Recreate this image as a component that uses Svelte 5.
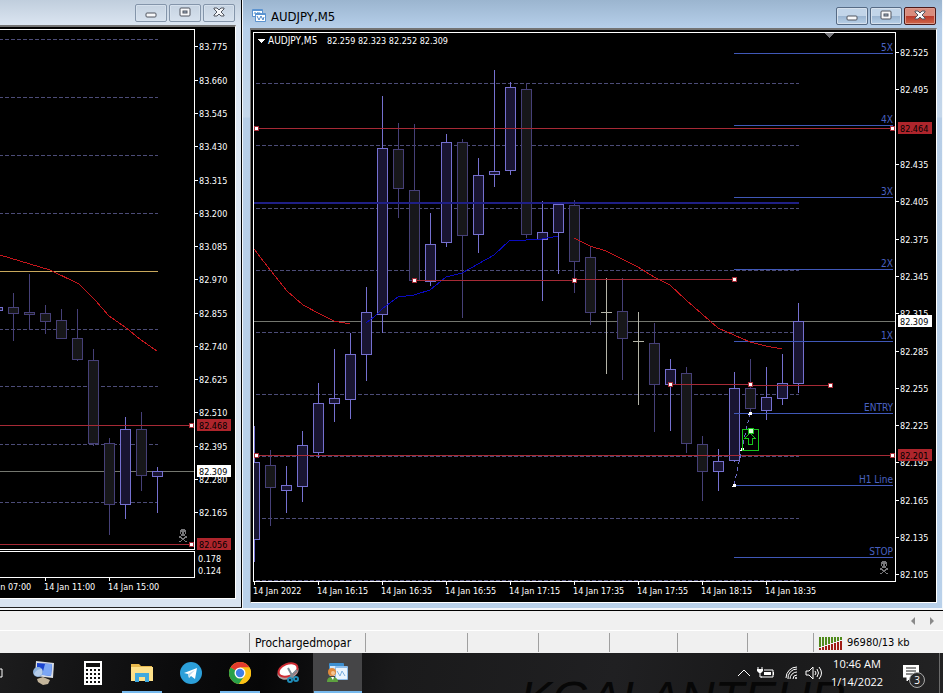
<script lang="ts">
	type Kind = 'up' | 'down' | 'doji';
	// x, high, body top, body bottom, low
	type Candle = [number, number, number, number, number, Kind];

	const h4Candles: Candle[] = [
		[-3, 307, 307, 310, 310, 'up'],
		[13, 293, 307, 313, 341, 'down'],
		[29, 274, 312, 314, 330, 'down'],
		[45, 305, 313, 321, 334, 'down'],
		[61, 309, 320, 338, 339, 'down'],
		[77, 309, 338, 359, 361, 'down'],
		[93, 349, 360, 443, 446, 'down'],
		[109, 438, 443, 504, 535, 'down'],
		[125, 417, 429, 504, 519, 'up'],
		[141, 412, 429, 475, 491, 'down'],
		[157, 467, 471, 476, 513, 'up']
	];

	const m5Candles: Candle[] = [
		[254, 426, 462, 539, 562, 'up'],
		[270, 450, 465, 487, 526, 'down'],
		[286, 466, 485, 490, 513, 'up'],
		[302, 431, 445, 486, 502, 'up'],
		[318, 383, 403, 452, 458, 'up'],
		[334, 349, 398, 403, 422, 'up'],
		[350, 333, 354, 399, 419, 'up'],
		[366, 287, 312, 354, 381, 'up'],
		[382, 96, 148, 314, 333, 'up'],
		[398, 123, 149, 188, 218, 'down'],
		[414, 124, 190, 280, 283, 'down'],
		[430, 213, 244, 281, 286, 'up'],
		[446, 134, 142, 242, 247, 'up'],
		[462, 139, 142, 235, 318, 'down'],
		[478, 158, 175, 234, 253, 'up'],
		[494, 70, 171, 174, 187, 'up'],
		[510, 82, 87, 170, 175, 'up'],
		[526, 83, 89, 234, 238, 'down'],
		[542, 201, 232, 239, 301, 'up'],
		[558, 203, 204, 232, 274, 'up'],
		[574, 200, 205, 261, 293, 'down'],
		[590, 246, 257, 312, 325, 'down'],
		[606, 278, 312, 312, 374, 'doji'],
		[622, 278, 311, 338, 380, 'down'],
		[638, 312, 341, 341, 405, 'doji'],
		[654, 323, 343, 384, 432, 'down'],
		[670, 359, 369, 384, 431, 'up'],
		[686, 367, 373, 443, 453, 'down'],
		[702, 436, 444, 471, 501, 'down'],
		[718, 449, 461, 471, 491, 'up'],
		[734, 372, 388, 460, 462, 'up'],
		[750, 359, 388, 408, 413, 'down'],
		[766, 367, 397, 410, 420, 'up'],
		[782, 354, 383, 398, 405, 'up'],
		[798, 303, 321, 383, 393, 'up']
	];

	const h4Prices: [string, number][] = [
		['83.775', 46], ['83.660', 80], ['83.545', 113], ['83.430', 146], ['83.315', 180],
		['83.200', 213], ['83.085', 246], ['82.970', 279], ['82.855', 313], ['82.740', 346],
		['82.625', 379], ['82.510', 412], ['82.395', 446], ['82.280', 479], ['82.165', 512]
	];
	const m5Prices: [string, number][] = [
		['82.525', 52], ['82.495', 89], ['82.435', 164], ['82.405', 201], ['82.375', 239],
		['82.345', 276], ['82.315', 313], ['82.285', 351], ['82.255', 388], ['82.225', 425],
		['82.195', 462], ['82.165', 500], ['82.135', 537], ['82.105', 574]
	];

	const levels: [string, number][] = [
		['5X', 53], ['4X', 125], ['3X', 197], ['2X', 269],
		['1X', 341], ['ENTRY', 413], ['H1 Line', 485], ['STOP', 557]
	];

	const h4Grid = [39, 97, 155, 213, 329, 386, 444, 502];
	const m5Grid = [83, 145, 208, 270, 332, 394, 456, 518, 580];
	const m5Times = ['14 Jan 2022', '14 Jan 16:15', '14 Jan 16:35', '14 Jan 16:55', '14 Jan 17:15', '14 Jan 17:35', '14 Jan 17:55', '14 Jan 18:15', '14 Jan 18:35'];
	const h4Times = ['14 Jan 07:00', '14 Jan 11:00', '14 Jan 15:00'];
	const statusWidths = [102, 71, 71, 68, 70, 66];
	const trafficBars = [0, 1, 2, 3, 4, 5, 6, 7];
</script>

{#snippet candles(list: Candle[])}
	{#each list as [x, high, top, bottom, low, kind]}
		<g class={kind}>
			<rect class="ink" {x} y={high} width="1" height={low - high} />
			<rect class="ink" x={x - 5} y={top} width="11" height={bottom - top + 1} />
			{#if kind !== 'doji'}
				<rect class="fill" x={x - 4} y={top + 1} width="9" height={Math.max(bottom - top - 1, 0)} />
			{/if}
		</g>
	{/each}
{/snippet}

{#snippet handle(x: number, y: number)}
	<rect class="handle-edge" x={x - 2} y={y - 2} width="5" height="5" />
	<rect class="handle" x={x - 1} y={y - 1} width="3" height="3" />
{/snippet}

{#snippet skull(x: number, y: number)}
	<g class="skull" transform="translate({x} {y})">
		<path d="M2 0h4v1h1v4h-1v2h-4v-2h-1v-4h1zM0 7h2v1h1v1h2v-1h1v-1h2v2h-2v1h-1v1h1v1h2v1h-2v-1h-1v-1h-2v1h-1v1h-2v-1h2v-1h1v-1h-1v-1h-2z" />
		<path class="hole" d="M2 3h1v2h-1zM5 3h1v2h-1z" />
	</g>
{/snippet}

{#snippet price(label: string, y: number)}
	<rect class="tick" x="0" {y} width="3" height="1" />
	<text x="4" y={y + 4}>{label}</text>
{/snippet}

{#snippet tag(label: string, y: number, kind: string)}
	<rect class="tag {kind}" x="2" y={y - 6} width="34" height="12" />
	<text class="tag-text {kind}" x="4" y={y + 4}>{label}</text>
{/snippet}

{#snippet windowButtons()}
	<div class="window-buttons">
		<button aria-label="Minimize">
			<svg width="14" height="14"><rect class="glyph" x="2" y="7" width="10" height="4" rx="1" /></svg>
		</button>
		<button aria-label="Restore">
			<svg width="14" height="14">
				<rect class="glyph" x="2" y="2" width="10" height="8" rx="1" />
				<rect class="glyph inner" x="5" y="5" width="4" height="2" />
			</svg>
		</button>
		<button class="close" aria-label="Close">
			<svg width="14" height="14">
				<path class="glyph" d="M2 2h3l2 2 2-2h3v1l-3 3 3 3v1h-3l-2-2-2 2h-3v-1l3-3-3-3z" />
			</svg>
		</button>
	</div>
{/snippet}

<div class="desktop">
	<main class="workspace">
		<section class="window inactive" aria-label="AUDJPY,H4">
			<header class="titlebar">{@render windowButtons()}</header>
			<div class="chart">
				<div class="plot">
					<svg class="canvas">
						<g transform="translate(0 -30)">
							{#each h4Grid as y}
								<line class="grid" x1="-1" x2="158" y1={y} y2={y} />
							{/each}
							<rect class="pivot" x="0" y="271" width="158" height="1" />
							<rect class="bid" x="0" y="471" width="194" height="1" />
							{@render candles(h4Candles)}
							<rect class="sr" x="0" y="425" width="194" height="1" />
							<rect class="sr" x="0" y="544" width="194" height="1" />
							<polyline class="ma red" points="0,255 50,270 79,284 95,300 109,316 125,327 141,340 157,351" />
							{@render skull(179, 529)}
							{@render handle(191, 425)}
							{@render handle(191, 544)}
						</g>
					</svg>
				</div>
				<div class="subplot"></div>
				<div class="price-axis">
					<svg class="canvas">
						<g transform="translate(0 -29)">
							{#each h4Prices as [label, y]}
								{@render price(label, y)}
							{/each}
							{@render tag('82.468', 425, 'red')}
							{@render tag('82.309', 471, 'white')}
							{@render tag('82.056', 544, 'red')}
							<text x="3" y="562">0.178</text>
							<text x="3" y="574">0.124</text>
						</g>
					</svg>
				</div>
				<div class="time-axis">
					<svg class="canvas">
						{#each h4Times as label, i}
							<rect class="tick" x={i * 64 - 19} y="0" width="1" height="3" />
							<text x={i * 64 - 20} y="12">{label}</text>
						{/each}
					</svg>
				</div>
			</div>
		</section>

		<section class="window active" aria-label="AUDJPY,M5">
			<header class="titlebar">
				<svg class="chart-icon" width="15" height="14">
					<rect x="0" y="0" width="11" height="8" rx="1" fill="#5b93d0" />
					<rect x="1" y="2" width="9" height="5" fill="#fff" />
					<path d="M2 5l1-2 1 2 2-2 1 2 1-2" fill="none" stroke="#7cb0e0" />
					<rect x="3" y="4" width="11" height="9" rx="1" fill="#5b93d0" />
					<rect x="4" y="6" width="9" height="6" fill="#fff" />
					<path d="M5 7l2 4 2-4 2 4 1-3" fill="none" stroke="#4e87c8" />
				</svg>
				<h1>AUDJPY,M5</h1>
				{@render windowButtons()}
			</header>
			<div class="chart">
				<div class="plot">
					<svg class="canvas">
						<g transform="translate(-254 -33)">
							{#each m5Grid as y}
								<line class="grid" x1="256" x2="799" y1={y} y2={y} />
							{/each}
							<rect class="bid" x="254" y="321" width="641" height="1" />
							{@render candles(m5Candles)}
							<rect class="daily" x="254" y="202" width="545" height="2" />
							<rect class="sr" x="254" y="128" width="640" height="1" />
							<rect class="sr" x="254" y="455" width="640" height="1" />
							{#each levels as [label, y]}
								<rect class="level" x="734" {y} width="159" height="1" />
								<text class="level-text" x="893" y={y - 2}>{label}</text>
							{/each}
							<polyline class="ma red" points="254,249 271,271 287,291 303,305 318,313 334,321 350,324" />
							<polyline class="ma blue" points="366,323 375,316 382,309 398,297 414,295 430,290 446,277 462,273 478,264 494,255 510,240 526,240 542,239 558,236" />
							<polyline class="ma red" points="574,238 590,246 606,251 622,259 638,267 654,277 670,285 686,300 702,314 718,328 734,335 750,342 766,346 782,349" />
							<polyline class="trend" points="414,280 574,280 575,279 734,279" />
							<polyline class="trend" points="670,384 750,384 751,385 830,385" />
							<line class="projection" x1="734" y1="485" x2="750" y2="413" />
							{#each [[256, 128], [892, 128], [256, 455], [892, 455], [414, 280], [574, 280], [734, 279], [670, 384], [750, 384], [830, 385]] as [x, y]}
								{@render handle(x, y)}
							{/each}
							{#each [[734, 485], [742, 449], [750, 413]] as [x, y]}
								<path class="pin" d="M{x - 1} {y - 1}h3v3h-4v-1h1z" />
							{/each}
							<g class="buy">
								<rect x="742" y="429" width="16" height="21" />
								<path d="M750 433l5 5h-3v6h-4v-6h-3z" />
							</g>
							<rect class="buy-pin" x="748" y="428" width="5" height="5" />
							<path class="shift" d="M824 33h10l-5 5z" />
							{@render skull(880, 561)}
							<path class="toggle" d="M257 39h8l-4 4z" />
							<text class="symbol" x="268" y="44">AUDJPY,M5</text>
							<text x="327" y="44">82.259 82.323 82.252 82.309</text>
						</g>
					</svg>
				</div>
				<div class="price-axis">
					<svg class="canvas">
						<g transform="translate(0 -32)">
							{#each m5Prices as [label, y]}
								{@render price(label, y)}
							{/each}
							{@render tag('82.464', 128, 'red')}
							{@render tag('82.309', 321, 'white')}
							{@render tag('82.201', 455, 'red')}
						</g>
					</svg>
				</div>
				<div class="time-axis">
					<svg class="canvas">
						{#each m5Times as label, i}
							<rect class="tick" x={i * 64 + 1} y="0" width="1" height="3" />
							<text x={i * 64} y="12">{label}</text>
						{/each}
					</svg>
				</div>
			</div>
		</section>
	</main>

	<div class="tabstrip">
		<button aria-label="Scroll left"><svg width="5" height="8"><path d="M4 0v8l-4-4z" /></svg></button>
		<button aria-label="Scroll right"><svg width="5" height="8"><path d="M0 0v8l4-4z" /></svg></button>
	</div>

	<footer class="statusbar">
		<div class="cell hint"></div>
		<div class="cell profile">Prochargedmopar</div>
		{#each statusWidths as width}
			<div class="cell" style="width: {width}px"></div>
		{/each}
		<div class="cell traffic">
			<svg width="24" height="14">
				{#each trafficBars as i}
					<rect x={i * 3} y="1" width="2" height={10 - i} fill="#4f8a1c" />
					<rect x={i * 3} y={12 - i} width="2" height={i + 2} fill="#a01c14" />
				{/each}
			</svg>
			96980/13 kb
		</div>
	</footer>

	<nav class="taskbar" aria-label="Taskbar">
		<span class="wallpaper" aria-hidden="true">KGALANTEUR</span>
		<button class="partial" aria-label="Task view"><svg width="4" height="10"><path d="M0 1h2v8h-2" fill="none" stroke="#fff" /></svg></button>
		<button class="task" aria-label="Remote computer">
			<svg width="24" height="26">
				<path d="M5 19l6-2 7 3-2 4-5 1-5-3z" fill="#c3b59b" />
				<path d="M4 1l18 2-1 15-18-2z" fill="#d9dde4" />
				<path d="M5 3l15 1-1 12-14-2z" fill="#1a43cf" />
				<path d="M13 4l7 0-1 12-9-1z" fill="#7ba6f5" />
				<circle cx="6" cy="12" r="5" fill="#8fb2dc" />
				<path d="M2 14c2-4 5-5 8-5v5c-3 3-6 3-8 0z" fill="#b5cce9" />
			</svg>
		</button>
		<button class="task" aria-label="Calculator">
			<svg width="18" height="24">
				<rect width="18" height="24" fill="#fff" />
				<rect x="2" y="2" width="14" height="4" fill="#111" />
				{#each [9, 13, 17, 21] as y}
					{#each [2, 6, 10, 14] as x}
						<rect {x} y={y - 1} width="2" height="2" fill="#111" />
					{/each}
				{/each}
			</svg>
		</button>
		<button class="task open" aria-label="File Explorer">
			<svg width="22" height="20">
				<path d="M0 1h8l2 2h11v15H0z" fill="#e8b84c" />
				<path d="M0 4h22v14H0z" fill="#fde08a" />
				<path d="M4 10h14v9h-4v-5H8v5H4z" fill="#3fa9df" />
			</svg>
		</button>
		<button class="task" aria-label="Telegram">
			<svg width="22" height="22">
				<circle cx="11" cy="11" r="11" fill="#2c9fd9" />
				<path d="M4 11l13-5-2 11-4-3-2 2-1-4z" fill="#fff" />
				<path d="M8 12l7-4-5 5-1 3z" fill="#b9d9ec" />
			</svg>
		</button>
		<button class="task open" aria-label="Chrome">
			<svg width="22" height="22" viewBox="0 0 22 22">
				<circle cx="11" cy="11" r="11" fill="#fbc116" />
				<path d="M11 11L1.500 5.500A11 11 0 0 1 20.500 5.500H11z" fill="#e33b2e" />
				<path d="M11 11l-9.500-5.500A11 11 0 0 0 10 22l6-9z" fill="#29a14a" />
				<path d="M11 5.500h9.500A11 11 0 0 1 10 22l5.800-8.200z" fill="#fbc116" />
				<circle cx="11" cy="11" r="5.500" fill="#fff" />
				<circle cx="11" cy="11" r="4.200" fill="#3f7fe8" />
			</svg>
		</button>
		<button class="task" aria-label="Snipping Tool">
			<svg width="26" height="24">
				<ellipse cx="12" cy="11" rx="11" ry="7" transform="rotate(-22 12 11)" fill="#ad9f9f" />
				<ellipse cx="12" cy="9" rx="10" ry="6" transform="rotate(-22 12 9)" fill="#fff" stroke="#cf2c33" stroke-width="2" />
				<path d="M12 7l6 11M21 9l-7 7" stroke="#7d8b94" stroke-width="2" />
				<circle cx="14" cy="19" r="2" fill="none" stroke="#1f8cb8" stroke-width="2" />
				<circle cx="20" cy="18" r="2" fill="none" stroke="#1f8cb8" stroke-width="2" />
			</svg>
		</button>
		<button class="task open current" aria-label="MetaTrader">
			<svg width="22" height="20">
				<rect x="2" y="0" width="15" height="13" rx="1" fill="#3d8fd0" />
				<rect x="3" y="3" width="13" height="10" fill="#d4e8fa" />
				<rect x="8" y="3" width="13" height="14" rx="1" fill="#8dbdea" />
				<rect x="9" y="5" width="11" height="11" fill="#eaf4fd" />
				<path d="M10 8l3 5 2-5 3 5" fill="none" stroke="#7cb0e0" />
				<circle cx="5" cy="9" r="4" fill="#e08a3c" />
				<circle cx="6" cy="10" r="2" fill="#f5c795" />
				<path d="M0 19c0-4 2-5 5-5s6 1 6 5z" fill="#5da13f" />
				<path d="M4 14h3l-1 3z" fill="#fff" />
			</svg>
		</button>

		<div class="tray">
			<button aria-label="Show hidden icons"><svg width="14" height="10"><path d="M1 8l6-6 6 6" /></svg></button>
			<button class="battery" aria-label="Battery">
				<svg width="18" height="14">
					<path d="M7 4h9v7H4M3 7v4h2M1 1v2M5 1v2" />
					<path d="M0 3h6v2l-2 2h-2l-2-2zM7 6h7v3H7zM16 6h1v3h-1z" fill="#fff" stroke="none" />
				</svg>
			</button>
			<button aria-label="Wi-Fi">
				<svg width="14" height="14">
					<circle cx="11" cy="12" r="1" fill="#fff" />
					<path d="M8 13a4 4 0 0 1 4-4M5 13a7 7 0 0 1 7-7M3 13a9 9 0 0 1 9-10M1 12A11 11 0 0 1 12 1" />
				</svg>
			</button>
			<button aria-label="Volume">
				<svg width="18" height="14">
					<path d="M1 5h3l4-4v12l-4-4H1zM10 5q2 2 0 4M12 3q3 4 0 8M14 1q5 6 0 12" />
				</svg>
			</button>
			<button class="clock"><time>10:46 AM</time><span>1/14/2022</span></button>
			<button class="notifications" aria-label="Notifications, 3 new">
				<svg width="16" height="16">
					<path class="solid" d="M0 0h16v12h-8l-4 4v-4H0z" />
					<path class="dark" d="M3 3h10M3 6h10M3 9h7" />
				</svg>
				<span class="badge">3</span>
			</button>
			<button class="peek" aria-label="Show desktop"></button>
		</div>
	</nav>
</div>

<style>
	:global(body) {
		margin: 0;
	}

	.desktop {
		display: flex;
		flex-direction: column;
		height: 100vh;
		min-height: 400px;
		overflow: hidden;
		font-family: 'DejaVu Sans Condensed', 'DejaVu Sans', sans-serif;
		font-size: 12px;
		color: #000;
	}

	button {
		display: flex;
		align-items: center;
		justify-content: center;
		padding: 0;
		border: 0;
		background: none;
		font: inherit;
		color: inherit;
	}

	svg {
		display: block;
	}

	.workspace {
		flex: 1;
		min-height: 0;
		display: grid;
		grid-template-columns: 242px 1fr;
		padding: 0 1px 2px 0;
		background: #f4f7fa;
	}

	.window {
		display: flex;
		flex-direction: column;
		min-width: 0;
		min-height: 0;
		box-sizing: border-box;
	}

	.inactive {
		padding: 0 5px 8px 0;
		border-right: 1px solid #000;
		border-bottom: 1px solid #222;
		background: linear-gradient(#c0cedd, #dce6f2 26px, #d9e4f1);
	}

	.active {
		padding: 0 5px 5px 7px;
		border-left: 1px solid #f4f8fc;
		background: linear-gradient(#9bb5cf, #b6cfea 28px, #c5d7ea 117px, #b7cee7 118px, #b9d1ea);
	}

	.titlebar {
		display: flex;
		align-items: center;
		flex: none;
		height: 25px;
		box-sizing: border-box;
	}

	.active .titlebar {
		height: 28px;
		padding: 4px 1px 0 2px;
	}

	.inactive .titlebar {
		padding-right: 1px;
	}

	.chart-icon {
		margin-right: 4px;
	}

	h1 {
		margin: 0;
		font-size: 13px;
		font-weight: 400;
	}

	.window-buttons {
		display: flex;
		gap: 2px;
		margin-left: auto;
	}

	.window-buttons button {
		width: 32px;
		height: 18px;
		box-sizing: border-box;
		border: 1px solid #8495aa;
		border-radius: 2px;
		box-shadow: inset 0 0 0 1px #d6e1ed;
	}

	.active .window-buttons button {
		border-color: #566b85;
		background: linear-gradient(#c2d5e9 50%, #9ab4d0 50%, #b9d1e8);
	}

	.active .window-buttons .close {
		border-color: #4c1a18;
		box-shadow: inset 0 0 0 1px #dc9a8c;
		background: linear-gradient(#d98c7d 50%, #b8382a 50%, #cf6648);
	}

	.glyph {
		fill: #f7f8fa;
		stroke: #50555f;
	}

	.inner {
		fill: #9fb2c7;
	}

	.chart {
		flex: 1;
		min-height: 0;
		display: grid;
		grid-template-columns: minmax(0, 1fr) 40px;
		border-top: 2px solid #747474;
		border-right: 1px solid #fff;
		border-bottom: 1px solid #fff;
		background: #000;
	}

	.inactive .chart {
		grid-template-rows: minmax(0, 1fr) 27px 20px;
		padding-top: 2px;
	}

	.active .chart {
		grid-template-rows: minmax(0, 1fr) 20px;
		padding: 2px 0 0 2px;
		border-left: 1px solid #747474;
	}

	.plot,
	.subplot {
		min-height: 0;
		border: 1px solid #fff;
	}

	.inactive .plot,
	.inactive .subplot {
		border-left: 0;
	}

	.inactive .plot {
		margin-bottom: 1px;
	}

	.subplot {
		grid-row: 2;
	}

	.price-axis {
		grid-column: 2;
		grid-row: 1;
		min-height: 0;
	}

	.inactive .price-axis {
		grid-row: 1 / 3;
	}

	.time-axis {
		grid-column: 1 / 3;
		min-width: 0;
	}

	.canvas {
		width: 100%;
		height: 100%;
		overflow: hidden;
		shape-rendering: crispEdges;
		font-size: 9px;
	}

	.canvas text {
		fill: #fff;
	}

	.tick {
		fill: #fff;
	}

	.grid {
		stroke: #4c4c78;
		stroke-dasharray: 4 2;
	}

	.up .ink {
		fill: #7570d0;
	}

	.up .fill {
		fill: #191532;
	}

	.down .ink {
		fill: #464078;
	}

	.down .fill {
		fill: #17171a;
	}

	.doji .ink {
		fill: #b4b4a8;
	}

	.bid {
		fill: #74776f;
	}

	.sr {
		fill: #a62a36;
	}

	.pivot {
		fill: #c8a85c;
	}

	.daily {
		fill: #1f1f86;
	}

	.level {
		fill: #4058b8;
	}

	.symbol {
		font-size: 10px;
	}

	.canvas .level-text {
		fill: #4a62c0;
		font-size: 10px;
		text-anchor: end;
	}

	.ma,
	.trend {
		fill: none;
		stroke: #c4161c;
	}

	.blue {
		stroke: #0a0ac0;
	}

	.trend {
		stroke: #a62a36;
	}

	.projection {
		stroke: #6a6ac8;
		stroke-dasharray: 4 3;
	}

	.handle,
	.pin {
		fill: #fff;
	}

	.handle-edge {
		fill: #a62a36;
	}

	.buy {
		fill: none;
		stroke: #18c51c;
	}

	.buy-pin {
		fill: #d5ffd5;
		stroke: #18c51c;
	}

	.shift {
		fill: #77777c;
	}

	.toggle {
		fill: #fff;
	}

	.skull {
		fill: #77777a;
	}

	.hole {
		fill: #000;
	}

	.tag.red {
		fill: #ae252c;
	}

	.tag.white {
		fill: #fff;
	}

	.canvas .tag-text {
		fill: #000;
	}

	.tabstrip {
		display: flex;
		justify-content: flex-end;
		gap: 14px;
		height: 19px;
		padding-right: 8px;
		border-top: 1px solid #000;
		background: #f0f0f0;
	}

	.tabstrip path {
		fill: #8a8a8a;
	}

	.statusbar {
		display: flex;
		height: 22px;
		border-top: 1px solid #fff;
		background: #f0f0f0;
	}

	.cell {
		flex: none;
		display: flex;
		align-items: center;
		height: 19px;
		margin-top: 2px;
		box-sizing: border-box;
		border-left: 1px solid #a0a0a0;
	}

	.hint {
		flex: 1;
		border-left: 0;
	}

	.profile {
		width: 116px;
		padding-left: 5px;
	}

	.traffic {
		width: 130px;
		gap: 4px;
		padding-left: 5px;
		font-size: 11px;
	}

	.taskbar {
		position: relative;
		display: flex;
		flex: none;
		height: 40px;
		overflow: hidden;
		background: linear-gradient(100deg, #1c1c1d, #0c0c0d 18%, #060607 28%, #1a1a1b 42%, #202022 65%, #19191a 80%, #222223);
		color: #fff;
		font-family: 'Open Sans', sans-serif;
	}

	.wallpaper {
		position: absolute;
		left: 520px;
		top: 22px;
		color: #070707;
		font: italic 48px/48px 'Liberation Sans', sans-serif;
	}

	.partial {
		width: 19px;
		justify-content: flex-start;
	}

	.task {
		width: 49px;
	}

	.open {
		background: linear-gradient(#76b9ed, #76b9ed) center bottom / 40px 2px no-repeat;
	}

	.current {
		background-color: #454547;
		background-size: 48px 2px;
	}

	.tray {
		position: relative;
		display: flex;
		margin-left: auto;
		gap: 6px;
	}

	.tray path {
		fill: none;
		stroke: #fff;
	}

	.tray .solid {
		fill: #fff;
	}

	.tray .dark {
		stroke: #1c1c1d;
	}

	.battery {
		margin-right: 4px;
	}

	.clock {
		flex-direction: column;
		width: 56px;
		margin-right: 12px;
		font-size: 11px;
		line-height: 18px;
		white-space: nowrap;
	}

	.notifications {
		position: relative;
		justify-content: flex-start;
		width: 30px;
	}

	.badge {
		position: absolute;
		left: 6px;
		bottom: 5px;
		width: 14px;
		height: 14px;
		border: 1px solid #aaa;
		border-radius: 50%;
		background: #29292a;
		font-size: 10px;
		line-height: 14px;
	}

	.tray .battery path[fill] {
		fill: #fff;
		stroke: none;
	}

	.peek {
		width: 4px;
		border-left: 1px solid #6b6b6b;
	}
</style>
